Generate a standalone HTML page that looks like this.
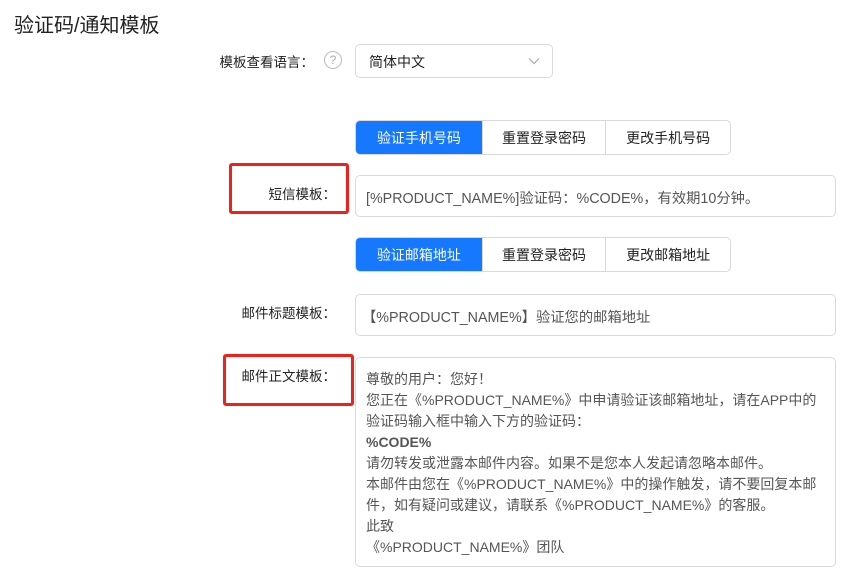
<!DOCTYPE html><html><head><meta charset="utf-8"><style>
*{box-sizing:border-box;margin:0;padding:0}
body{width:864px;height:586px;background:#fff;font-family:"Liberation Sans","Noto Sans CJK SC",sans-serif;color:#333;position:relative;overflow:hidden;font-size:14px}
.a{position:absolute}
.lbl{position:absolute;right:528px;text-align:right;color:#222;font-size:13.5px}
.box{position:absolute;border:1px solid #d9d9d9;border-radius:5px;background:#fff;color:#555;font-size:14px}
.seg{position:absolute;height:35px;display:flex;border-radius:5px;overflow:hidden;border:1px solid #d9d9d9}
.seg div{display:flex;align-items:center;justify-content:center;font-size:14px;color:#222;border-left:1px solid #d9d9d9}
.seg div:first-child{border-left:none;background:#1677ff;color:#fff}
.red{position:absolute;border:3px solid #f0201a;border-radius:3px}
</style></head><body>
<div class="a" style="left:14px;top:9px;font-size:20px;color:#222">验证码/通知模板</div>
<div class="lbl" style="top:51px;right:550px">模板查看语言：</div>
<div class="a" style="left:324px;top:51px;width:18px;height:18px;border:1px solid #bbb;border-radius:50%;color:#aaa;font-size:12px;text-align:center;line-height:16px">?</div>
<div class="box" style="left:355px;top:44px;width:198px;height:34px;padding:7px 13px;color:#222">简体中文
<svg class="a" style="left:172px;top:12px" width="12" height="8" viewBox="0 0 12 8"><path d="M1 1.5L6 6.5L11 1.5" fill="none" stroke="#aaa" stroke-width="1.2"/></svg></div>
<div class="seg" style="left:355px;top:120px;width:376px"><div style="width:126px">验证手机号码</div><div style="width:124px">重置登录密码</div><div style="width:125px">更改手机号码</div></div>
<div class="lbl" style="top:183px">短信模板：</div>
<div class="red" style="left:229px;top:163px;width:120px;height:51px"></div>
<div class="box" style="left:355px;top:175px;width:481px;height:42px;padding:11px 10px;font-size:14.3px">[%PRODUCT_NAME%]验证码：%CODE%，有效期10分钟。</div>
<div class="seg" style="left:355px;top:237px;width:376px"><div style="width:126px">验证邮箱地址</div><div style="width:124px">重置登录密码</div><div style="width:125px">更改邮箱地址</div></div>
<div class="lbl" style="top:302px">邮件标题模板：</div>
<div class="box" style="left:355px;top:294px;width:481px;height:42px;padding:11px 6px;font-size:14.3px">【%PRODUCT_NAME%】验证您的邮箱地址</div>
<div class="lbl" style="top:365px">邮件正文模板：</div>
<div class="red" style="left:223px;top:354px;width:131px;height:52px"></div>
<div class="box" style="left:355px;top:357px;width:481px;height:210px;padding:11px 10px;line-height:21px;font-size:14px;white-space:nowrap">尊敬的用户：您好！<br>您正在《%PRODUCT_NAME%》中申请验证该邮箱地址，请在APP中的<br>验证码输入框中输入下方的验证码：<br><b>%CODE%</b><br>请勿转发或泄露本邮件内容。如果不是您本人发起请忽略本邮件。<br>本邮件由您在《%PRODUCT_NAME%》中的操作触发，请不要回复本邮<br>件，如有疑问或建议，请联系《%PRODUCT_NAME%》的客服。<br>此致<br>《%PRODUCT_NAME%》团队</div>
</body></html>
